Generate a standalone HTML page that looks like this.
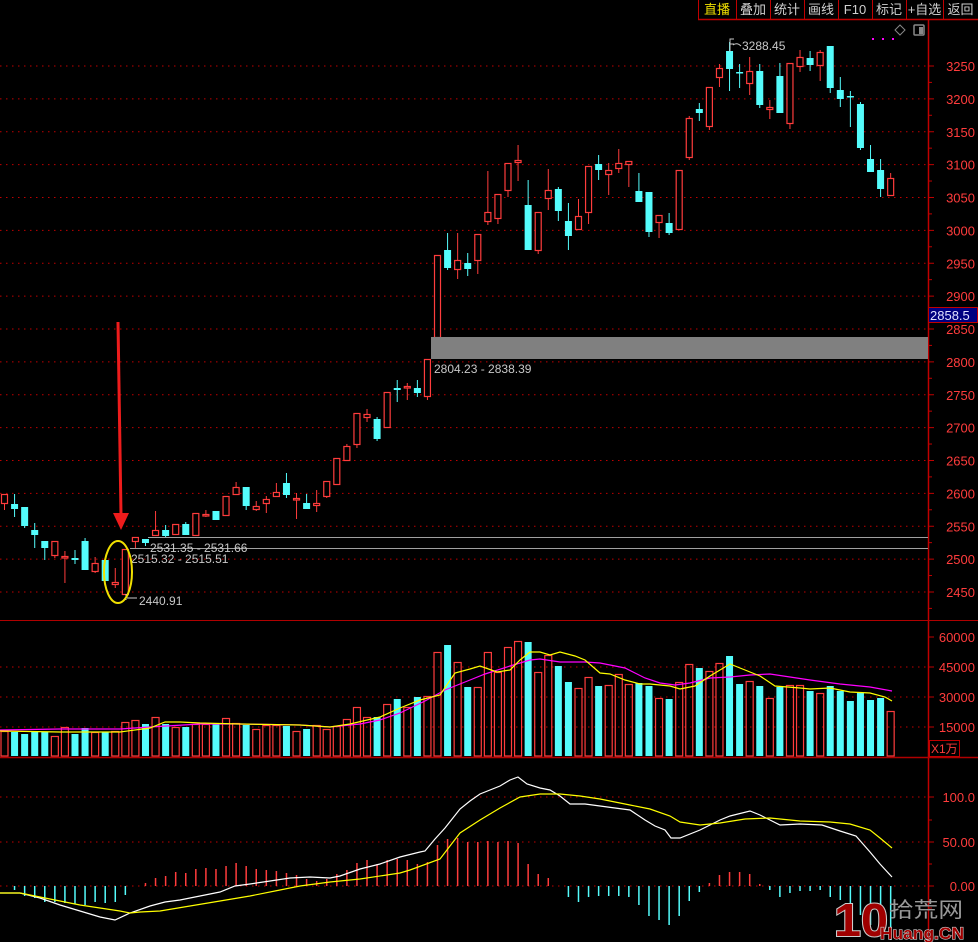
<!DOCTYPE html>
<html><head><meta charset="utf-8">
<style>
html,body{margin:0;padding:0;background:#000;width:978px;height:942px;overflow:hidden}
svg{display:block}
text{font-family:"Liberation Sans","Noto Sans CJK SC",sans-serif}
</style></head>
<body>
<svg id="s" width="978" height="942" viewBox="0 0 978 942" xmlns="http://www.w3.org/2000/svg">
<rect width="978" height="942" fill="#000"/>
<g id="grid"></g>
<g id="main"></g>
<g id="vol"></g>
<g id="macd"></g>
<g id="ov"></g>
</svg>
<script>
var NS="http://www.w3.org/2000/svg";
function el(p,t,a,txt){var e=document.createElementNS(NS,t);for(var k in a)e.setAttribute(k,a[k]);if(txt!=null)e.textContent=txt;document.getElementById(p).appendChild(e);return e;}
var R="#ff3c3c",C="#54fcfc",GR="#c8c8c8";
function X(i){return 4.5+i*10.07;}
for(var k=0;k<17;k++){var y=66+k*32.875;
 el("grid","line",{x1:0,y1:y,x2:928,y2:y,stroke:"#c00000","stroke-width":1,"stroke-dasharray":"1.5,4.5"});
 el("grid","line",{x1:928,y1:y,x2:934,y2:y,stroke:"#c00000"});
 el("grid","line",{x1:928,y1:y+16.4,x2:932,y2:y+16.4,stroke:"#c00000"});
 el("grid","text",{x:975,y:y+5,fill:R,"font-size":13,"text-anchor":"end"},String(3250-50*k));
}
[727,697,667,637].forEach(function(y,i){
 if(i<3)el("grid","line",{x1:0,y1:y,x2:928,y2:y,stroke:"#c00000","stroke-dasharray":"1.5,4.5"});
 el("grid","line",{x1:928,y1:y,x2:934,y2:y,stroke:"#c00000"});
 el("grid","text",{x:975,y:y+5,fill:R,"font-size":13,"text-anchor":"end"},["15000","30000","45000","60000"][i]);
});
[[797,"100.0"],[842,"50.00"],[886,"0.00"]].forEach(function(a){
 el("grid","line",{x1:0,y1:a[0],x2:928,y2:a[0],stroke:"#c00000","stroke-dasharray":"1.5,4.5"});
 el("grid","line",{x1:928,y1:a[0],x2:934,y2:a[0],stroke:"#c00000"});
 el("grid","text",{x:975,y:a[0]+5,fill:R,"font-size":13,"text-anchor":"end"},a[1]);
});
el("grid","line",{x1:928,y1:820,x2:932,y2:820,stroke:"#c00000"});
el("grid","line",{x1:928,y1:864,x2:932,y2:864,stroke:"#c00000"});
el("grid","line",{x1:928,y1:908,x2:932,y2:908,stroke:"#c00000"});
el("grid","line",{x1:928.5,y1:19,x2:928.5,y2:942,stroke:"#c00000","stroke-width":1.5});
el("grid","line",{x1:0,y1:620.5,x2:978,y2:620.5,stroke:"#b00000","stroke-width":1});
el("grid","line",{x1:0,y1:757.5,x2:978,y2:757.5,stroke:"#b00000","stroke-width":1.5});
el("grid","line",{x1:698,y1:19.5,x2:978,y2:19.5,stroke:"#c00000","stroke-width":1.5});
var cd=[
["r",494,503,494,510],["c",504,509,494,517],["c",507,526,507,528],["c",530,535,523,548],["c",541,548,541,560],
["r",541,555,541,558],["r",556,557,551,583],["c",558,560,550,564],["c",541,570,538,570],["r",563,571,557,573],
["c",560,581,560,581],["r",582,584,568,588],["r",549,594,549,594],["r",537,541,537,548],["c",539,543,539,546],
["r",530,535,511,535],["c",530,536,525,538],["r",524,534,524,534],["c",524,535,522,535],["r",513,535,513,535],
["r",514,515,510,517],["c",511,520,511,520],["r",496,515,496,515],["r",487,494,482,494],["c",487,506,487,510],
["r",506,509,501,511],["r",499,503,496,513],["r",492,496,483,496],["c",483,495,473,498],["r",498,499,493,519],
["c",503,509,494,509],["r",503,505,490,512],["r",481,496,481,498],["r",458,484,458,484],["r",446,460,444,461],
["r",413,444,413,448],["r",414,417,409,422],["c",419,439,417,441],["r",392,427,392,427],["c",388,390,380,402],
["r",386,387,383,400],["c",388,393,380,397],["r",359,396,359,400],["r",255,337,255,337],["c",250,268,233,270],
["r",260,269,233,279],["c",263,269,253,276],["r",234,260,234,274],["r",212,221,171,225],["r",194,218,194,224],
["r",163,190,163,197],["r",160,162,145,181],["c",205,250,180,250],["r",212,250,212,254],["r",190,198,169,210],
["c",189,211,187,221],["c",221,236,203,250],["r",216,229,199,229],["r",166,212,166,224],["c",164,170,155,180],
["r",170,174,163,195],["r",163,168,149,173],["r",161,164,161,187],["c",191,202,173,202],["c",192,232,192,237],
["r",215,222,215,238],["c",223,233,213,235],["r",170,229,170,229],["r",118,157,116,160],["c",109,113,103,121],
["r",87,126,87,130],["r",68,77,64,87],["c",51,69,42,91],["c",72,73,64,88],["r",71,83,57,95],
["c",71,105,64,108],["r",107,109,100,119],["c",76,113,63,113],["r",63,123,63,129],["r",57,66,50,72],
["c",58,65,51,71],["r",52,65,50,81],["c",46,88,46,93],["c",90,99,77,107],["c",96,97,91,127],
["c",104,148,102,150],["c",159,172,145,172],["c",170,189,159,197],["r",178,195,173,195]];
cd.forEach(function(c,i){var x=X(i),col=c[0]=="r"?R:C;
 el("main","line",{x1:x,y1:c[3],x2:x,y2:c[4],stroke:col,"stroke-width":1});
 var h=Math.max(c[2]-c[1],1.5);
 if(c[0]=="r")el("main","rect",{x:x-3,y:c[1]+0.5,width:6,height:h,fill:"#000",stroke:col,"stroke-width":1.2});
 else el("main","rect",{x:x-3.5,y:c[1],width:7,height:h,fill:col});
});
var vt=[731,732,734,732,732,736,727,734,728,732,732,731,722,720,724,717,724,727,727,724,724,723,718,723,725,729,725,725,726,731,729,725,729,726,719,707,717,717,704,699,707,697,696,652,645,662,687,687,652,672,647,641,642,672,655,666,682,688,677,686,685,674,684,683,686,698,699,682,664,668,671,663,656,684,681,686,698,687,685,685,691,693,686,691,701,693,700,698,711];
vt.forEach(function(t,i){var x=X(i),c=cd[i][0];
 if(c=="r")el("vol","rect",{x:x-3.5,y:t+0.5,width:7,height:755.5-t,fill:"none",stroke:R,"stroke-width":1.2});
 else el("vol","rect",{x:x-3.5,y:t,width:7,height:756-t,fill:C});
});
function pl(g,pts,col,w){el(g,"polyline",{points:pts.map(function(p){return p.join(",")}).join(" "),fill:"none",stroke:col,"stroke-width":w||1.2});}
pl("vol",[[0,730],[60,729],[120,729],[150,727],[200,724],[240,724],[300,725],[330,727],[360,724],[380,720],[400,713],[425,701],[445,690],[470,680],[485,674],[510,666],[530,660],[540,659],[560,662],[585,662],[600,663],[625,668],[645,678],[660,683],[675,685],[690,683],[710,678],[730,677],[750,675],[770,674],[790,677],[810,680],[840,684],[870,687],[892,691]],"#ff00ff");
pl("vol",[[0,731],[60,732],[120,732],[150,728],[165,722],[180,722],[200,723],[240,724],[300,725],[330,727],[350,724],[380,717],[400,708],[420,700],[440,695],[455,673],[470,669],[480,666],[497,672],[510,670],[520,660],[530,652],[540,652],[550,655],[560,652],[575,656],[585,660],[600,673],[610,674],[625,680],[640,684],[650,684],[670,686],[680,689],[695,686],[710,676],[730,664],[745,670],[760,676],[775,686],[800,688],[810,689],[830,688],[850,692],[870,693],[885,697],[892,701]],"#ffff00");
var hv={1:890,2:896,3:898,4:902,5:902,6:903,7:904,8:905,9:902,10:903,11:902,12:895,14:883,15:878,16:876,17:872,18:873,19:869,20:868,21:869,22:866,23:863,24:866,25:869,26:870,27:871,28:873,29:875,30:879,31:881,32:879,33:874,34:870,35:863,36:860,37:864,38:860,39:859,40:860,41:864,42:862,43:845,44:839,45:838,46:842,47:842,48:841,49:842,50:841,51:843,52:864,53:874,54:878,56:897,57:902,58:897,59:896,60:896,61:896,62:897,63:905,64:916,65:920,66:925,67:916,68:901,69:892,70:883,71:875,72:872,73:872,74:874,75:884,76:890,77:897,78:893,79:891,80:891,81:890,82:897,83:900,84:910,85:915,86:925,87:935,88:940};
for(var i in hv){var v=hv[i];el("macd","line",{x1:X(+i),y1:886,x2:X(+i),y2:v,stroke:v<886?R:C,"stroke-width":1.5});}
pl("macd",[[0,893],[20,893],[40,898],[60,905],[80,911],[100,917],[115,920],[130,913],[150,906],[165,902],[180,900],[200,896],[220,892],[235,886],[250,884],[270,881],[290,878],[310,877],[330,878],[340,876],[360,869],[380,864],[400,857],[420,852],[425,851],[435,839],[445,828],[460,809],[470,801],[480,794],[500,786],[510,780],[518,777],[527,784],[540,788],[550,790],[560,796],[570,804],[585,804],[600,806],[630,810],[645,820],[655,826],[665,830],[671,838],[680,838],[700,830],[720,820],[730,816],[750,811],[760,815],[780,825],[800,824],[822,825],[840,831],[856,836],[870,852],[880,864],[892,877]],"#ffffff");
pl("macd",[[0,893],[20,893],[30,895],[50,899],[80,905],[100,908],[120,911],[130,913],[140,912],[160,911],[190,906],[220,901],[250,896],[280,890],[300,886],[330,882],[360,879],[400,873],[410,870],[440,859],[460,833],[480,820],[500,808],[520,797],[540,794],[560,794],[580,796],[600,799],[630,805],[650,809],[670,816],[680,822],[700,825],[720,823],[745,819],[770,818],[800,821],[830,822],[850,824],[870,830],[880,838],[892,848]],"#ffff00");
el("ov","rect",{x:431,y:337,width:497,height:22,fill:"#808080"});
el("ov","text",{x:434,y:373,fill:GR,"font-size":12},"2804.23 - 2838.39");
el("ov","line",{x1:148,y1:537.5,x2:928,y2:537.5,stroke:"#a0a0a0"});
el("ov","line",{x1:130,y1:548.5,x2:928,y2:548.5,stroke:"#a0a0a0"});
el("ov","text",{x:150,y:552,fill:GR,"font-size":12},"2531.35 - 2531.66");
el("ov","text",{x:131,y:563,fill:GR,"font-size":12},"2515.32 - 2515.51");
el("ov","text",{x:139,y:605,fill:GR,"font-size":12},"2440.91");
el("ov","line",{x1:127,y1:598,x2:137,y2:598,stroke:GR});
el("ov","line",{x1:126,y1:594,x2:126,y2:600,stroke:GR});
el("ov","text",{x:742,y:50,fill:GR,"font-size":12},"3288.45");
el("ov","path",{d:"M730 52 V39 H734 M730 44 L734 44 M733 45 Q737 42 741 46",stroke:GR,fill:"none"});
el("ov","line",{x1:118,y1:322,x2:121,y2:515,stroke:"#ee1c1c","stroke-width":3});
el("ov","polygon",{points:"113,513 129,513 121,530",fill:"#ee1c1c"});
el("ov","ellipse",{cx:118,cy:572,rx:14,ry:31,fill:"none",stroke:"#f0e000","stroke-width":2});
el("ov","rect",{x:928.5,y:307.5,width:49,height:15,fill:"#000080",stroke:"#c00000"});
el("ov","text",{x:930,y:320,fill:"#e0e0ff","font-size":13},"2858.5");
el("ov","rect",{x:929.5,y:740.5,width:30,height:16,fill:"none",stroke:"#c00000"});
el("ov","text",{x:931,y:753,fill:R,"font-size":12},"X1万");
el("ov","path",{d:"M900 25 L905 30 L900 35 L895 30 Z",fill:"none",stroke:"#888"});
el("ov","rect",{x:914,y:25,width:10,height:10,fill:"none",stroke:"#888","stroke-width":1.5,rx:1});
el("ov","rect",{x:919,y:27,width:4,height:7,fill:"#888"});
[872,882,892].forEach(function(x){el("ov","rect",{x:x,y:38,width:2,height:2,fill:"#ff00ff"});});
var tb=[["直播",698,736,"#f0e000"],["叠加",736,770],["统计",770,804],["画线",804,838],["F10",838,872],["标记",872,906],["+自选",906,943],["返回",943,978]];
tb.forEach(function(t){
 el("ov","line",{x1:t[1]+0.5,y1:0,x2:t[1]+0.5,y2:19,stroke:"#c00000"});
 el("ov","text",{x:(t[1]+t[2])/2,y:14,fill:t[3]||"#d0d0d0","font-size":13,"text-anchor":"middle"},t[0]);
});
el("ov","text",{x:834,y:936,fill:"#a00000",stroke:"#ccc","stroke-width":2,"font-size":46,"font-weight":"bold","paint-order":"stroke",textLength:54,lengthAdjust:"spacingAndGlyphs"},"10");
el("ov","text",{x:889,y:917,fill:"#999","font-size":21,textLength:74,lengthAdjust:"spacingAndGlyphs"},"拾荒网");
el("ov","text",{x:880,y:939,fill:"#a00000",stroke:"#ccc","stroke-width":1.2,"font-size":17,"font-weight":"bold","paint-order":"stroke",textLength:84,lengthAdjust:"spacingAndGlyphs"},"Huang.CN");
</script>
</body></html>
